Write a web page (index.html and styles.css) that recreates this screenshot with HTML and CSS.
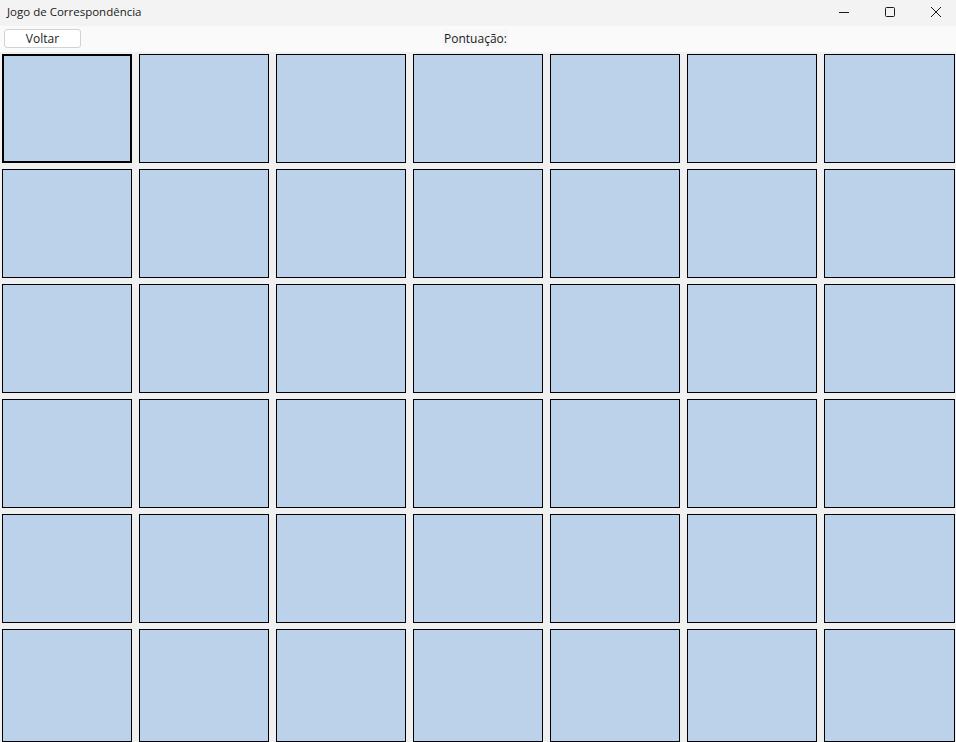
FILE: index.html
```html
<!DOCTYPE html>
<html lang="pt">
<head>
<meta charset="utf-8">
<title>Jogo de Correspondência</title>
<link rel="stylesheet" href="styles.css">
</head>
<body>
<div class="window">
  <header class="titlebar">
    <span class="title">Jogo de Correspondência</span>
    <div class="controls">
      <span class="ctl"><svg width="10" height="10" viewBox="0 0 10 10"><path d="M0 5.5H10" stroke="#1a1a1a" stroke-width="1"/></svg></span>
      <span class="ctl"><svg width="10" height="10" viewBox="0 0 10 10"><rect x="0.5" y="0.5" width="9" height="9" rx="1" fill="none" stroke="#1a1a1a" stroke-width="1"/></svg></span>
      <span class="ctl"><svg width="10" height="10" viewBox="0 0 10 10"><path d="M0 0L10 10M10 0L0 10" stroke="#1a1a1a" stroke-width="1"/></svg></span>
    </div>
  </header>
  <div class="toolbar">
    <button class="btn">Voltar</button>
    <span class="score">Pontuação:</span>
  </div>
  <main class="grid">
    <div class="tile focused"></div><div class="tile"></div><div class="tile"></div><div class="tile"></div><div class="tile"></div><div class="tile"></div><div class="tile"></div>
    <div class="tile"></div><div class="tile"></div><div class="tile"></div><div class="tile"></div><div class="tile"></div><div class="tile"></div><div class="tile"></div>
    <div class="tile"></div><div class="tile"></div><div class="tile"></div><div class="tile"></div><div class="tile"></div><div class="tile"></div><div class="tile"></div>
    <div class="tile"></div><div class="tile"></div><div class="tile"></div><div class="tile"></div><div class="tile"></div><div class="tile"></div><div class="tile"></div>
    <div class="tile"></div><div class="tile"></div><div class="tile"></div><div class="tile"></div><div class="tile"></div><div class="tile"></div><div class="tile"></div>
    <div class="tile"></div><div class="tile"></div><div class="tile"></div><div class="tile"></div><div class="tile"></div><div class="tile"></div><div class="tile"></div>
  </main>
</div>
</body>
</html>
```
FILE: styles.css
```css
* { box-sizing: border-box; }
html, body { margin: 0; padding: 0; }
body {
  width: 956px;
  height: 742px;
  overflow: hidden;
  background: #f0f0f0;
  font-family: "Open Sans", "Noto Sans", "Liberation Sans", sans-serif;
  color: #1a1a1a;
}
.window {
  display: flex;
  flex-direction: column;
  height: 742px;
  overflow: hidden;
}
.titlebar {
  height: 26px;
  display: flex;
  align-items: center;
  justify-content: space-between;
  background: #f3f3f3;
  padding-left: 7px;
}
.title {
  font-size: 11.5px;
  color: #1a1a1a;
  margin-top: -3px;
}
.controls {
  display: flex;
  height: 100%;
  margin-right: -3px;
}
.ctl {
  width: 46px;
  height: 100%;
  display: flex;
  align-items: center;
  justify-content: center;
  padding-bottom: 3px;
}
.toolbar {
  height: 26px;
  background: #fafafa;
  display: grid;
  grid-template-columns: 1fr auto 1fr;
  align-items: center;
  padding-left: 4px;
}
.btn {
  justify-self: start;
  width: 77px;
  height: 19px;
  margin-top: -1px;
  background: #ffffff;
  border: 1px solid #d2d2d2;
  border-radius: 3px;
  font-family: inherit;
  font-size: 12px;
  line-height: 15px;
  color: #1a1a1a;
  padding: 0;
}
.score {
  font-size: 12px;
  background: #f7f7f7;
  padding: 0 1px;
  margin-left: -9px;
  margin-top: -1px;
}
.grid {
  flex: 1;
  display: grid;
  grid-template-columns: repeat(6, 130px) 1fr;
  grid-template-rows: repeat(5, 109px) 1fr;
  column-gap: 7px;
  row-gap: 6px;
  padding: 2px 1px 0 2px;
}
.tile {
  background: #bcd2ea;
  border: 1px solid #000;
}
.tile.focused {
  border-width: 2px;
}
```
